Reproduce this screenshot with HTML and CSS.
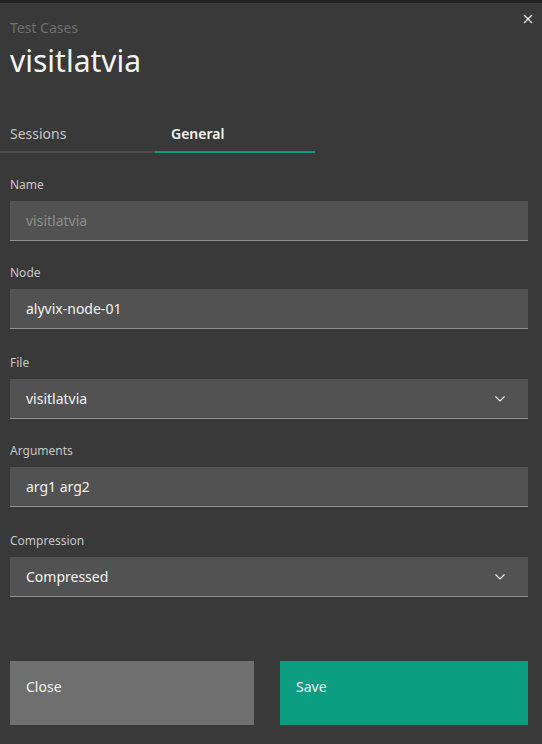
FILE: index.html
```html
<!DOCTYPE html>
<html>
<head>
<meta charset="utf-8">
<link rel="stylesheet" href="styles.css">
</head>
<body>
<div class="topbar"></div>
<div class="modal">
  <button class="close-x" aria-label="close">
    <svg width="10" height="10" viewBox="0 0 10 10"><path d="M1 1L9 9M9 1L1 9" stroke="#f4f4f4" stroke-width="1.2"/></svg>
  </button>
  <header class="head">
    <div class="label-top">Test Cases</div>
    <h1 class="title">visitlatvia</h1>
  </header>
  <nav class="tabs">
    <div class="tab">Sessions</div>
    <div class="tab active">General</div>
  </nav>
  <form class="form">
    <div class="field">
      <label class="flabel">Name</label>
      <div class="input disabled">visitlatvia</div>
    </div>
    <div class="field">
      <label class="flabel">Node</label>
      <div class="input">alyvix-node-01</div>
    </div>
    <div class="field sel">
      <label class="flabel">File</label>
      <div class="input select">visitlatvia
        <svg class="chev" width="10" height="6" viewBox="0 0 10 6"><path d="M0.5 0.5L5 5L9.5 0.5" fill="none" stroke="#f4f4f4" stroke-width="1.1"/></svg>
      </div>
    </div>
    <div class="field">
      <label class="flabel">Arguments</label>
      <div class="input">arg1 arg2</div>
    </div>
    <div class="field sel">
      <label class="flabel">Compression</label>
      <div class="input select">Compressed
        <svg class="chev" width="10" height="6" viewBox="0 0 10 6"><path d="M0.5 0.5L5 5L9.5 0.5" fill="none" stroke="#f4f4f4" stroke-width="1.1"/></svg>
      </div>
    </div>
  </form>
  <div class="buttons">
    <div class="btn secondary">Close</div>
    <div class="btn primary">Save</div>
  </div>
</div>
</body>
</html>
```
FILE: styles.css
```css
html, body {
  margin: 0;
  padding: 0;
  background: #393939;
  font-family: "Noto Sans", "Open Sans", sans-serif;
  color: #f4f4f4;
}
.topbar {
  height: 3px;
  background: #222222;
}
.modal {
  position: relative;
  padding: 0 14px 0 10px;
}
.close-x {
  position: absolute;
  top: 11px;
  right: 9px;
  background: none;
  border: 0;
  padding: 0;
  width: 10px;
  height: 10px;
  display: flex;
}
.head {
  padding-top: 16px;
}
.label-top {
  font-size: 14px;
  line-height: 18px;
  color: #6f6f6f;
}
.title {
  margin: 4px 0 0;
  font-weight: 400;
  font-size: 30px;
  line-height: 40px;
  color: #f4f4f4;
}
.tabs {
  display: flex;
  margin: 38px 0 0 -10px;
}
.tab {
  width: 145px;
  padding: 0 0 0 10px;
  height: 32px;
  font-size: 14px;
  line-height: 30px;
  color: #c6c6c6;
  border-bottom: 2px solid #4c4c4c;
}
.tab.active {
  width: 144px;
  padding-left: 16px;
  font-weight: 600;
  color: #f4f4f4;
  border-bottom: 2px solid #0d9b7f;
}
.form {
  margin-top: 24px;
  display: flex;
  flex-direction: column;
  gap: 24px;
}
.field {
  display: flex;
  flex-direction: column;
}
.field.sel {
  margin-top: 2px;
}
.flabel {
  font-size: 12px;
  line-height: 16px;
  color: #c6c6c6;
  margin-bottom: 8px;
}
.input {
  height: 39px;
  background: #525252;
  border-bottom: 1px solid #8d8d8d;
  padding: 0 16px;
  font-size: 14px;
  line-height: 39px;
  color: #f4f4f4;
  display: flex;
  align-items: center;
  justify-content: space-between;
}
.input.disabled {
  color: #8d8d8d;
}
.chev {
  margin-right: 7px;
}
.buttons {
  display: flex;
  gap: 26px;
  margin-top: 64px;
}
.btn {
  height: 64px;
  box-sizing: border-box;
  padding: 14px 16px;
  font-size: 14px;
  line-height: 24px;
  color: #f4f4f4;
}
.btn.secondary {
  width: 244px;
  background: #6f6f6f;
}
.btn.primary {
  flex: 1;
  background: #0b9d80;
}
```
